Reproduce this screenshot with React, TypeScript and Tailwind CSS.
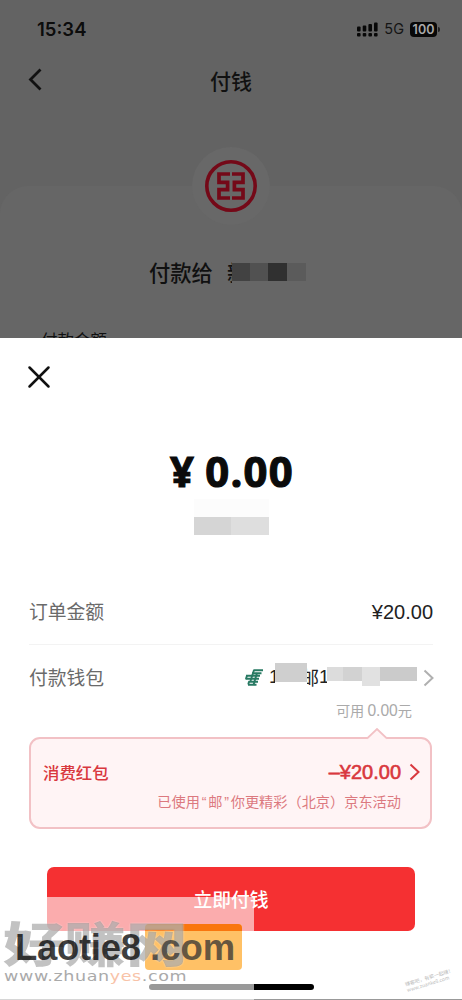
import { X } from "lucide-react";

function StatusBar() {
  return (
    <div className="flex h-[58px] items-center justify-between pl-[37px] pr-[22px]">
      <span className="mt-px font-['Inter'] text-[18.5px] font-semibold leading-none text-black/90">15:34</span>
      <div className="flex items-center gap-[6px]">
        <svg width="21" height="15" viewBox="0 0 21 15" fill="#080808">
          <rect x="0" y="4.5" width="3.6" height="5" rx="1" />
          <rect x="5.7" y="3.5" width="3.6" height="6" rx="1" />
          <rect x="11.4" y="2" width="3.6" height="7.5" rx="1" />
          <rect x="17" y="0.5" width="3.6" height="9" rx="1" />
          <rect x="0" y="11" width="3.6" height="3.4" rx="1" />
          <rect x="5.7" y="11" width="3.6" height="3.4" rx="1" />
          <rect x="11.4" y="11" width="3.6" height="3.4" rx="1" />
          <rect x="17" y="11" width="3.6" height="3.4" rx="1" />
        </svg>
        <span className="font-['Inter'] text-[14.5px] leading-none text-[#151515]">5G</span>
        <div className="flex items-center gap-px">
          <span className="flex h-[15px] w-[27px] items-center justify-center rounded-[4px] bg-[#080808] font-['Inter'] text-[12.5px] font-semibold leading-[15px] text-[#aaa]">
            100
          </span>
          <span className="h-[5px] w-[2px] rounded-r bg-[#222]" />
        </div>
      </div>
    </div>
  );
}

function BankLogo() {
  return (
    <svg width="52" height="52" viewBox="0 0 52 52" fill="none" stroke="#740918">
      <circle cx="26" cy="26" r="24.2" strokeWidth="3.6" />
      <path
        strokeWidth="3.7"
        d="M25 14H14V22.4H22.6V29.6H14V38H25M27 14H38V22.4H29.4V29.6H38V38H27"
      />
    </svg>
  );
}

// China Post emblem
function PostLogo() {
  return (
    <svg width="18" height="17" viewBox="0 0 18 17" fill="none" stroke="#287a63" strokeWidth="1.9">
      <path d="M8.5 1.3H18M7 4.2H16.5M1 6.8H15M0.5 9.8H14M3.5 12.8H13M3 15.8H11.5" />
      <path d="M9 1L5.5 12M2 6.5L1 10M12 4L8.5 16M4 12.5L3.3 15.5" />
    </svg>
  );
}

function Arrow({ className }: { className?: string }) {
  return (
    <svg className={className} width="11" height="18" viewBox="0 0 11 18" fill="none" stroke="currentColor" strokeWidth="2">
      <path d="M1.5 1.5L9.5 9L1.5 16.5" />
    </svg>
  );
}

function Watermark() {
  return (
    <div className="absolute left-0 top-[897px] h-[103px] w-[254px] overflow-hidden bg-white/60">
      <div className="absolute left-[145px] top-[27px] h-[46px] w-[97px] overflow-hidden rounded bg-[#ffc166]">
        <div className="h-[7px] bg-[#f9760e]" />
      </div>
      <div className="absolute left-[3px] top-[21px] origin-top scale-y-[0.78] whitespace-nowrap text-[61.5px] font-black leading-[60px] text-[#777]/45 [text-shadow:0_0_2px_#ffffff90]">
        好赚网
      </div>
      <div className="absolute left-[4px] top-[70px] origin-left scale-x-[1.25] whitespace-nowrap font-['DejaVu_Sans'] text-[14px] leading-[18px] tracking-[0.5px] text-[#aaa]">
        www.zhuan<span className="text-[#f8c3a8]">yes</span>.com
      </div>
    </div>
  );
}

export default function App() {
  return (
    <div className="relative h-[1000px] w-[462px] overflow-hidden bg-white font-['Noto_Sans_CJK_SC',sans-serif]">
      {/* Dimmed page */}
      <div className="h-[338px] overflow-hidden bg-[#636363]">
        <StatusBar />
        <header className="grid h-[48px] grid-cols-3 items-center px-[20px]">
          <svg className="-mt-[5px] ml-[8px]" width="15" height="23" viewBox="0 0 15 23" fill="none" stroke="#111" strokeWidth="2.8">
            <path d="M12.5 1.5L2.5 11.5L12.5 21.5" />
          </svg>
          <h1 className="-mt-[3px] text-center text-[21px] font-medium leading-none text-[#111]">付钱</h1>
        </header>

        <div className="mt-[80px] h-[160px] rounded-t-[28px] bg-[#666]">
          <div className="mx-auto flex w-[78px] flex-col items-center">
            <div className="-mt-[39px] flex size-[78px] shrink-0 items-center justify-center rounded-full bg-[#686868]">
              <BankLogo />
            </div>
          </div>
          <div className="mt-[32px] flex h-[30px] items-center pl-[149px] text-[21.3px] font-medium text-[#101010]">
            <span>付款给</span>
            <span className="ml-[14px] w-[5px] overflow-hidden">新</span>
            <div className="flex h-[18px]">
              <span className="w-[18px] bg-[#424242]" />
              <span className="w-[18px] bg-[#515151]" />
              <span className="w-[19px] bg-[#303030]" />
              <span className="w-[19px] bg-[#5b5b5b]" />
            </div>
          </div>
          <p className="ml-[41px] mt-[43px] text-[16.5px] leading-[20px] text-[#111]">付款金额</p>
        </div>
      </div>

      {/* Payment sheet */}
      <section className="flex h-[662px] flex-col bg-white">
        <X className="ml-[20px] mt-[20px] size-[38px] shrink-0 text-[#111]" strokeWidth={1.6} />
        <div className="mt-[51px] flex h-[48px] items-center justify-center gap-[10px] pl-[2px] font-['Open_Sans'] text-[41.8px] font-bold leading-none tracking-[1.3px] text-[#0b0b0b] [-webkit-text-stroke:1.1px]">
          <span>¥</span>
          <span>0.00</span>
        </div>
        <div className="mx-auto mt-[4px] w-[75px]">
          <div className="h-[18px] bg-[#fcfcfc]" />
          <div className="flex h-[18px]">
            <span className="w-1/2 bg-[#d5d5d5]" />
            <span className="w-1/2 bg-[#dedede]" />
          </div>
        </div>

        <div className="mx-[29px] mt-[43px] flex h-[67px] items-center justify-between border-b border-[#f3f3f3] text-[18.8px]">
          <span className="text-[#6a6a6a]">订单金额</span>
          <span className="mt-px font-['Liberation_Sans'] text-[20px] text-[#222]">¥20.00</span>
        </div>
        <div className="flex h-[65px] shrink-0 items-center pl-[29px] pr-[28px] text-[18.8px]">
          <span className="text-[#6a6a6a]">付款钱包</span>
          <div className="ml-auto flex items-center">
            <PostLogo />
            <span className="ml-[6px] w-[6px] overflow-hidden whitespace-nowrap font-['Liberation_Sans'] text-[#222]">1</span>
            <span className="-mt-[10px] h-[19px] w-[32px] bg-[#cfcfcf]" />
            <span className="flex w-[12px] justify-end overflow-hidden text-[#222]">邮</span>
            <span className="w-[8px] overflow-hidden font-['Liberation_Sans'] text-[#222]">1</span>
            <div className="-mt-[8px] flex h-[14px]">
              <span className="w-[16px] bg-[#dcdcdc]" />
              <span className="w-[19px] bg-[#d2d2d2]" />
              <span className="h-[19px] w-[18px] bg-[#e1e1e1]" />
              <span className="w-[37px] bg-[#cbcbcb]" />
            </div>
            <Arrow className="ml-[6px] text-[#b0b0b0]" />
          </div>
        </div>
        <p className="-mt-[10px] mr-[50px] text-right text-[14.2px] leading-[20px] text-[#aaa]">
          可用 <span className="font-['Liberation_Sans'] text-[15.6px]">0.00</span>元
        </p>

        {/* Red packet discount */}
        <div className="relative ml-[29px] mr-[30px] mt-[16px] h-[92px] shrink-0 rounded-[11px] border-2 border-[#f2c1c5] bg-[#fff4f5] px-[12px] text-[#d9383e]">
          <svg className="absolute -top-[11px] right-[43px]" width="20" height="12" viewBox="0 0 20 12">
            <path d="M0 12V10.5L10 1L20 10.5V12" fill="#fff4f5" />
            <path d="M0 10.5L10 1L20 10.5" fill="none" stroke="#f2c1c5" strokeWidth="1.8" />
          </svg>
          <div className="mt-[20px] flex h-[26px] items-center">
            <span className="text-[16.4px] font-medium">消费红包</span>
            <span className="ml-auto font-['Liberation_Sans'] text-[20px] [-webkit-text-stroke:0.6px]">–¥20.00</span>
            <Arrow className="-mr-[2px] ml-[8px]" />
          </div>
          <p className="mr-[17px] mt-[5px] text-right text-[14.2px] leading-[22px] text-[#dc797f]">
            已使用<span className="px-[1.8px] font-['Liberation_Sans']">“</span>邮<span className="px-[1.8px] font-['Liberation_Sans']">”</span>
            你更精彩（北京）京东活动
          </p>
        </div>

        <button className="mx-auto mt-[38px] h-[64px] w-[368px] shrink-0 rounded-[7px] bg-[#f53032] text-[18.8px] font-medium text-white">
          立即付钱
        </button>
        <div className="mx-auto mt-[53px] h-[6px] w-[165px] shrink-0 rounded-full bg-black" />
        <div className="mt-auto h-px bg-[#999]" />
      </section>

      <Watermark />
      <div className="absolute left-[15px] top-[925px] flex h-[46px] items-center whitespace-nowrap font-['Liberation_Sans'] text-[36.5px] font-bold">
        <span className="w-[135px] tracking-[-0.3px] text-black/75">Laotie8</span>
        <span className="text-[#333]/75">.com</span>
      </div>
      <div className="absolute left-[405px] top-[974px] -rotate-[17deg] whitespace-nowrap text-[5px] leading-[6px] text-[#bbb]">
        <div>赚客吧，有奖一起赚！</div>
        <div>www.zuanke8.com</div>
      </div>
    </div>
  );
}
